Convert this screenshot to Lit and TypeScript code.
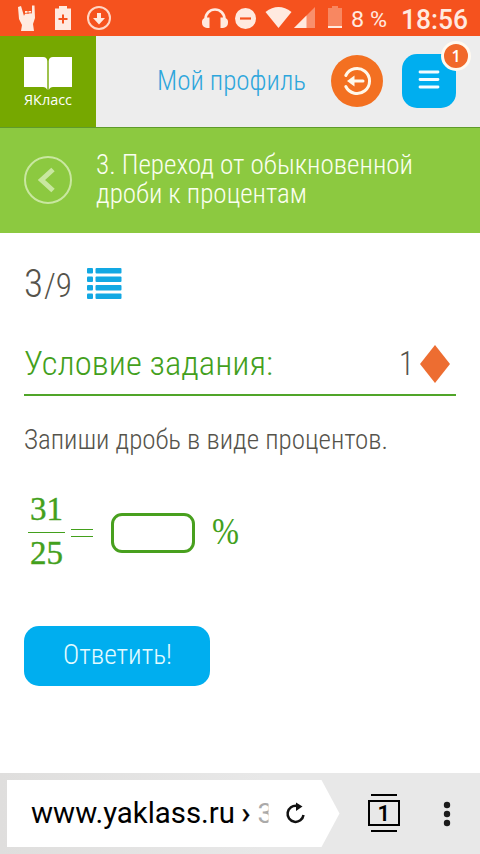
import { LitElement, html, css, svg } from "lit";
import { customElement } from "lit/decorators.js";

/** One line of text fitted to a given width. */
const line = (text: string, width: number, height: number, size: number, cls = "") => html`
  <svg class="line ${cls}" width=${width} height=${height} role="text">
    <text x="0" y=${height} font-size=${size} textLength=${width} lengthAdjust="spacingAndGlyphs">${text}</text>
  </svg>`;

@customElement("status-bar")
class StatusBar extends LitElement {
  static styles = css`
    :host { display: block; height: 36px; background: #f5521e; }
    svg { display: block; }
    text { font-family: Roboto, sans-serif; fill: #ffeae0; }
  `;
  render() {
    return html`<svg width="480" height="36" viewBox="0 0 480 36" fill="#ffeae0">
      <path d="M18 7l3-1 3 10 1-3V11h6l1 3V5.500h2.500L35 18l-2 6 1 7H21l1-6-3-6z"/>
      <path d="M24 13.500l8-.8M24.500 11.500v3M28 11v3" stroke="#f5521e" stroke-width=".9"/>
      <path d="M59 6h8v2.500h4V30H55V8.500h4z"/>
      <path d="M63 14.500v9M58.500 19h9" stroke="#f5521e" stroke-width="2"/>
      <circle cx="99" cy="18" r="11" fill="none" stroke="#ffd6c5" stroke-width="2"/>
      <path d="M97 13h4v5h4l-6 6.500L93 18h4z"/>
      <path d="M205.500 20v-1a9.500 9.500 0 0 1 19 0v1" fill="none" stroke="#ffeae0" stroke-width="2.600"/>
      <path d="M209.500 17.500v10.500h-2.500a5 5 0 0 1-5-5v-1.500q0-3 4-4zM220.500 17.500v10.500h2.500a5 5 0 0 0 5-5v-1.500q0-3-4-4z"/>
      <circle cx="245.500" cy="18.500" r="10.500"/>
      <path d="M240 18.500h11" stroke="#f5521e" stroke-width="2.200"/>
      <path d="M265.500 12Q278.500 2 291.500 12L278.500 28z"/>
      <path d="M315 7v21h-21z" opacity=".4"/><path d="M306.500 15.500V28H294z"/>
      <path d="M332 6h6v2h4v20h-14V8h4z" opacity=".35"/><path d="M328 26h14v2h-14z"/>
      <text x="351" y="26.800" font-size="21.500" textLength="36" lengthAdjust="spacingAndGlyphs">8 %</text>
      <text x="401" y="29" font-size="27" font-weight="500" textLength="67" lengthAdjust="spacingAndGlyphs">18:56</text>
    </svg>`;
  }
}

@customElement("site-header")
class SiteHeader extends LitElement {
  static styles = css`
    :host { display: flex; height: 91px; background: #ededed; border-bottom: 1.500px solid #5f9b2b; box-sizing: content-box; }
    svg { display: block; overflow: visible; }
    .logo { width: 96px; background: #76a800; }
    .logo text { font: 14.500px "Open Sans", sans-serif; fill: #fff; }
    .profile { margin: 34px 0 0 61px; width: 149px; }
    .line text { font-family: "Roboto Condensed", Roboto, sans-serif; font-weight: 300; font-stretch: 75%; fill: #2da6dc; }
    .back { margin: 19px 0 0 25px; }
    .menu { position: relative; margin: 18px 0 0 19px; width: 54px; height: 54px; border-radius: 15px; background: #00aeef; }
    .badge { position: absolute; right: -15px; top: -13px; width: 24px; height: 24px; border: 3px solid #fffaf0; border-radius: 50%; background: #f1692a; display: grid; place-items: center; color: #fff; font: 600 16px/24px "Open Sans", sans-serif; }
  `;
  render() {
    return html`
      <div class="logo"><svg width="96" height="91" fill="#fff">
        <path d="M24 21H43Q47 21 47.300 25V54Q46 51 43 51H24zM72 21H53Q49 21 48.700 25V54Q50 51 53 51H72z"/>
        <text x="24" y="68.500" textLength="48" lengthAdjust="spacingAndGlyphs">ЯКласс</text>
      </svg></div>
      <div class="profile">${line("Мой профиль", 149, 20, 27.5)}</div>
      <svg class="back" width="52" height="52" fill="none">
        <circle cx="26" cy="26" r="26" fill="#f37021"/>
        <path d="M14.800 20.500a12.500 12.500 0 1 1 0 11" stroke="#fff8ea" stroke-width="3" stroke-linecap="round"/>
        <path d="M32 26H21" stroke="#fff8ea" stroke-width="3" stroke-linecap="round"/>
        <path d="M16 26l7.500-5.500v11z" fill="#fff8ea"/>
      </svg>
      <div class="menu"><svg width="54" height="54">
        <path d="M18 18h18M18 25.500h18M18 33h18" stroke="#f4fcff" stroke-width="2.800" stroke-linecap="round"/></svg>
        <span class="badge">1</span>
      </div>`;
  }
}

@customElement("browser-bar")
class BrowserBar extends LitElement {
  static styles = css`
    :host { display: flex; height: 81px; box-sizing: border-box; padding: 7px 0 0 7px; background: linear-gradient(90deg, #dfdedd, #e8e8e8 55%); }
    svg { display: block; }
    text { font-family: Roboto, sans-serif; }
    .fade { -webkit-mask-image: linear-gradient(90deg, #000, transparent); mask-image: linear-gradient(90deg, #000, transparent); }
  `;
  render() {
    return html`<svg width="473" height="74" viewBox="7 780 473 74">
      <path d="M7 780H321.500L339.500 813.500 321.500 847H7z" fill="#fff"/>
      <text x="31" y="822.700" font-size="29.500" textLength="204" lengthAdjust="spacingAndGlyphs">www.yaklass.ru</text>
      <text x="241.500" y="823" font-size="29.500" stroke="#000" stroke-width=".4">›</text>
      <svg x="257" y="790" width="11.500" height="50"><text x="0.500" y="32.500" font-size="28" fill="#aaa">3</text></svg>
      <path d="M297 806a8 8 0 1 0 6.500 9" fill="none" stroke="#111" stroke-width="2.500"/>
      <path d="M296 802.500v8.500l6.500-4.500z" fill="#111"/>
      <path d="M371 795h26M371 831h26" stroke="#000" stroke-width="2"/>
      <rect x="369" y="801" width="30" height="24" fill="none" stroke="#000" stroke-width="2"/>
      <text x="377.500" y="821" font-size="22" font-weight="600">1</text>
      <g fill="#1b1b1b"><circle cx="447" cy="805" r="3.200"/><circle cx="447" cy="814" r="3.200"/><circle cx="447" cy="823" r="3.200"/></g>
    </svg>`;
  }
}

@customElement("app-root")
class AppRoot extends LitElement {
  static styles = css`
    :host { display: flex; flex-direction: column; width: 480px; height: 854px; overflow: hidden; background: #fff; }
    svg { display: block; overflow: visible; flex: none; }
    .line text { font-family: "Roboto Condensed", Roboto, sans-serif; font-weight: 300; font-stretch: 75%; fill: currentColor; }
    .line.math text { font-family: "Liberation Serif", serif; font-weight: 400; }
    .fraction .line.math text { stroke: currentColor; stroke-width: 0.4px; }
    .title { display: flex; height: 104.500px; flex: none; box-sizing: border-box; padding: 28px 24px 0; gap: 24px; background: #8cc940; color: #fbfff0; }
    .lines { display: grid; gap: 8.500px; align-content: start; margin-top: -2px; }
    main { flex: 1; padding: 0 24px; color: #55534b; }
    .counter { display: flex; align-items: flex-end; height: 64px; }
    .counter .total { color: #55534b; margin-left: 1px; }
    .list { margin: 0 0 -2.500px 14.500px; }
    .heading { display: flex; align-items: flex-end; height: 86px; margin-top: 13px; border-bottom: 2px solid #50a529; color: #43a01c; box-sizing: border-box; padding-bottom: 19px; }
    .points { margin-left: auto; color: #55534b; display: flex; align-items: flex-end; gap: 6px; padding-right: 6px; }
    .diamond { margin-bottom: -8.500px; }
    .task { margin-top: 33.500px; }
    .formula { display: flex; margin-top: 47.500px; height: 67px; color: #43a01c; }
    .fraction { width: 37px; margin-left: 4px; display: grid; justify-items: center; align-content: start; }
    .rule { width: 37px; height: 1.300px; background: currentColor; margin: 12px 0 8px; }
    .equals { width: 22px; height: 6px; border: solid currentColor; border-width: 1.500px 0; margin: 32.500px 0 0 5.500px; }
    .answer { width: 84px; height: 40px; box-sizing: border-box; border: 3px solid #48a01e; border-radius: 11px; margin: 16.500px 17px 0 18.500px; padding: 0; background: #fff; outline: none; }
    .percent { margin-top: 19.500px; }
    .submit { display: flex; justify-content: center; align-items: flex-start; width: 186px; height: 60px; border: 0; border-radius: 15px; padding: 18px 0 0; margin-top: 62px; background: #00aeef; color: #e4fbff; }
  `;
  render() {
    return html`
      <status-bar></status-bar>
      <site-header></site-header>
      <div class="title">
        <svg width="48" height="48" fill="none" stroke="#c9e7a0">
          <circle cx="24" cy="24" r="23" stroke-width="2"/>
          <path d="M29 13.500L17.500 24 29 34.500" stroke-width="5"/>
        </svg>
        <div class="lines">${line("3. Переход от обыкновенной", 317, 20, 27.5)}${line("дроби к процентам", 211, 20, 27.5)}</div>
      </div>
      <main>
        <div class="counter">
          ${line("3", 19, 28, 39)}<span class="total">${line("/9", 28, 24, 33)}</span>
          <svg class="list" width="35" height="31" fill="#12a8e3">${[0, 8.5, 17, 25.5].map((y) => svg`
            <rect x="0" y=${y} width="6" height="5.500" rx="1"/><rect x="8.500" y=${y} width="26" height="5.500" rx="1"/>`)}</svg>
        </div>
        <div class="heading">
          ${line("Условие задания:", 249, 24, 33)}
          <div class="points">${line("1", 15, 24, 33)}
            <svg class="diamond" width="30" height="38"><path d="M15 0l15 19-15 19L0 19z" fill="#ed6d31"/></svg></div>
        </div>
        <div class="task">${line("Запиши дробь в виде процентов.", 364, 20, 27.5)}</div>
        <div class="formula">
          <div class="fraction">${line("31", 33, 23, 34, "math")}<div class="rule"></div>${line("25", 33, 23, 34, "math")}</div>
          <div class="equals"></div>
          <input class="answer" aria-label="Ответ">
          <div class="percent">${line("%", 27, 28, 38, "math")}</div>
        </div>
        <button class="submit">${line("Ответить!", 109, 20, 27.5)}</button>
      </main>
      <browser-bar></browser-bar>`;
  }
}
